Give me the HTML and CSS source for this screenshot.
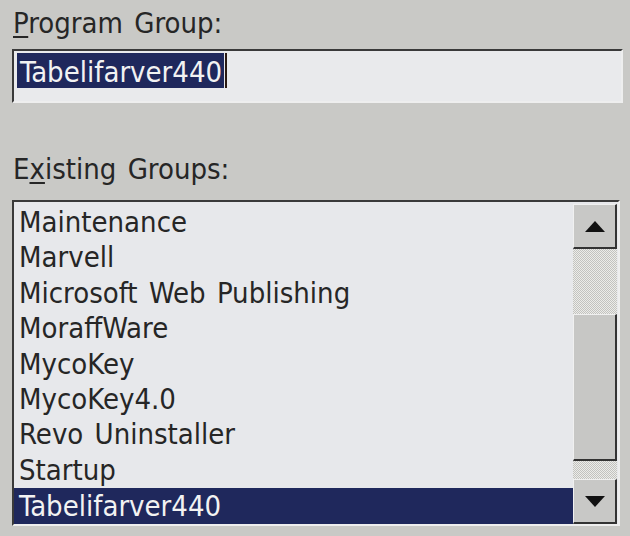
FILE: index.html
```html
<!DOCTYPE html>
<html>
<head>
<meta charset="utf-8">
<link rel="stylesheet" href="styles.css">
</head>
<body>
<div class="dialog">
  <div class="lbl lbl-program"><u>P</u>rogram Group:</div>
  <div class="field">
    <span class="sel">Tabelifarver440</span><span class="caret"></span>
  </div>
  <div class="lbl lbl-existing">E<u>x</u>isting Groups:</div>
  <div class="list">
    <ul class="items">
      <li>Maintenance</li>
      <li>Marvell</li>
      <li>Microsoft Web Publishing</li>
      <li>MoraffWare</li>
      <li>MycoKey</li>
      <li>MycoKey4.0</li>
      <li>Revo Uninstaller</li>
      <li>Startup</li>
      <li class="selected">Tabelifarver440</li>
    </ul>
    <div class="scrollbar">
      <div class="sbtn sbtn-up">
        <svg width="20" height="11" viewBox="0 0 20 11"><polygon points="10,0 20,11 0,11" fill="#111"/></svg>
      </div>
      <div class="track track-top"></div>
      <div class="thumb"></div>
      <div class="track track-bottom"></div>
      <div class="sbtn sbtn-down">
        <svg width="20" height="11" viewBox="0 0 20 11"><polygon points="0,0 20,0 10,11" fill="#111"/></svg>
      </div>
    </div>
  </div>
</div>
</body>
</html>
```

FILE: styles.css
```css
html, body {
  margin: 0;
  padding: 0;
  width: 630px;
  height: 536px;
  overflow: hidden;
  background: #c9c9c6;
}

.dialog {
  font-family: "DejaVu Sans Condensed", "DejaVu Sans", sans-serif;
  font-stretch: semi-condensed;
  font-size: 29px;
  word-spacing: 3px;
  color: #262626;
  padding: 7px 10px 0 12px;
  display: flex;
  flex-direction: column;
}

.lbl {
  line-height: 32px;
  height: 32px;
  padding-left: 1px;
  white-space: nowrap;
}

.lbl u {
  text-decoration-thickness: 2px;
  text-underline-offset: 3px;
}

.lbl-existing {
  margin-top: 50px;
}

.field {
  margin-top: 10px;
  height: 48px;
  width: 604px;
  background: #e9eaec;
  border-top: 2px solid #3a3a3a;
  border-left: 2px solid #3a3a3a;
  border-right: 2px solid #eeeeee;
  border-bottom: 2px solid #eeeeee;
  padding: 2px 0 0 3px;
  box-sizing: content-box;
  display: flex;
  align-items: flex-start;
}

.sel {
  background: #1f285c;
  color: #f2f2f2;
  height: 35px;
  line-height: 38px;
  padding: 0 2px 0 3px;
  white-space: nowrap;
}

.caret {
  width: 2px;
  height: 35px;
  margin-left: 1px;
  background: #2a1a12;
}

.list {
  margin-top: 15px;
  width: 604px;
  height: 322px;
  background: #e7e8eb;
  border-top: 2px solid #3a3a3a;
  border-left: 2px solid #3a3a3a;
  border-right: 2px solid #eeeeee;
  border-bottom: 2px solid #eeeeee;
  display: flex;
  align-items: stretch;
}

.items {
  list-style: none;
  margin: 0;
  padding: 3px 0 0 0;
  flex: 1;
}

.items li {
  height: 35.4px;
  line-height: 35.4px;
  padding-left: 5px;
  white-space: nowrap;
}

.items li.selected {
  background: #1f285c;
  color: #f2f2f2;
  line-height: 37px;
}

.scrollbar {
  width: 44px;
  margin: 0 1px 0 0;
  display: flex;
  flex-direction: column;
}

.sbtn {
  height: 42px;
  background: #c8c8c6;
  border-top: 1px solid #f0f0f0;
  border-left: 1px solid #f0f0f0;
  border-right: 2px solid #333333;
  border-bottom: 2px solid #333333;
  display: flex;
  align-items: center;
  justify-content: center;
}

.sbtn-up {
  margin-top: 2px;
}

.track {
  background: repeating-conic-gradient(#ecece9 0 25%, #c2c2bf 0 50%) 0 0 / 2px 2px;
}

.track-top {
  height: 65px;
}

.track-bottom {
  height: 18px;
}

.thumb {
  height: 144px;
  background: #c7c7c5;
  border-top: 1px solid #f0f0f0;
  border-left: 1px solid #f0f0f0;
  border-right: 2px solid #333333;
  border-bottom: 2px solid #333333;
}
```
